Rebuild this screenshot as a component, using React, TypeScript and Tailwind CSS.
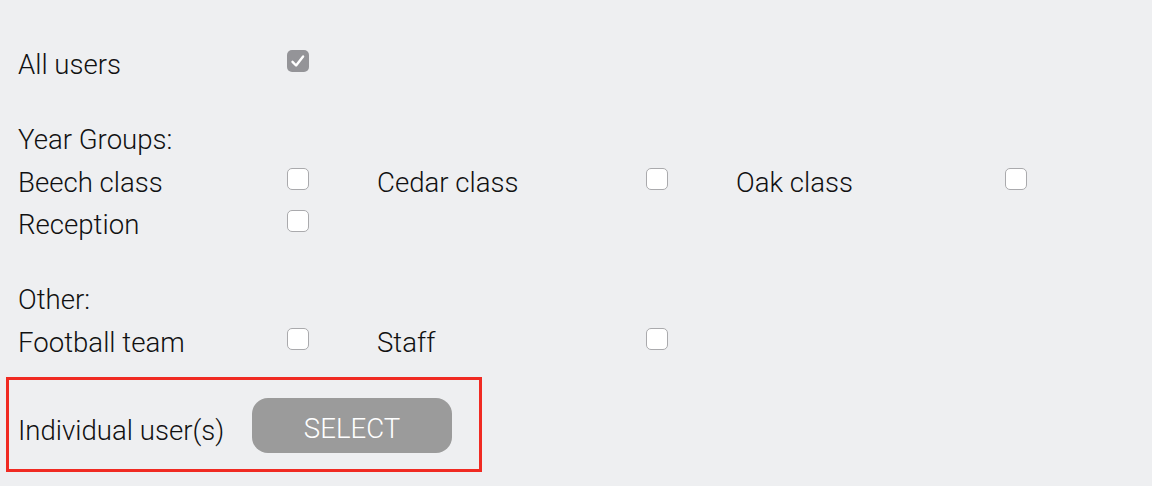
import React from 'react';

const Box = ({ checked = false }: { checked?: boolean }) =>
  checked ? (
    <span className="flex h-[22px] w-[22px] items-center justify-center rounded-[5px] bg-[#949498] -mt-[9px]">
      <svg viewBox="0 0 22 22" className="h-[22px] w-[22px]" fill="none" stroke="white" strokeWidth={2.4} strokeLinecap="round" strokeLinejoin="round">
        <path d="M5.5 11.8l3.6 3.7 7-9" />
      </svg>
    </span>
  ) : (
    <span className="block h-[22px] w-[22px] rounded-[5px] border border-[#aaaaad] bg-white -mt-[9px]" />
  );

const Item = ({ label, checked }: { label: string; checked?: boolean }) => (
  <div className="flex w-[359px] items-center">
    <span className="w-[269px]">{label}</span>
    <Box checked={checked} />
  </div>
);

const App: React.FC = () => {
  return (
    <div
      className="h-[486px] w-[1152px] overflow-hidden bg-[#eeeff1] pl-[18px] pt-[44px] text-[27.6px] font-light text-[#111]"
      style={{ fontFamily: 'Roboto, "Liberation Sans", sans-serif' }}
    >
      <div className="leading-[42px]">
        <Item label="All users" checked />
      </div>

      <div className="mt-[32px] leading-[44px]">Year Groups:</div>
      <div className="flex flex-wrap w-[1077px] leading-[42px]">
        <Item label="Beech class" />
        <Item label="Cedar class" />
        <Item label="Oak class" />
        <Item label="Reception" />
      </div>

      <div className="mt-[32px] leading-[44px]">Other:</div>
      <div className="flex leading-[42px]">
        <Item label="Football team" />
        <Item label="Staff" />
      </div>

      <div className="-ml-[12px] mt-[13px] flex h-[95px] w-[476px] items-center border-[3px] border-[#f02a22] pl-[9px]">
        <span className="w-[234px] pt-[12px]">Individual user(s)</span>
        <button className="mt-[1px] h-[55px] w-[200px] rounded-[16px] bg-[#9b9b9b] pt-[8px] text-[27.6px] font-light text-white">
          SELECT
        </button>
      </div>
    </div>
  );
};

export default App;
